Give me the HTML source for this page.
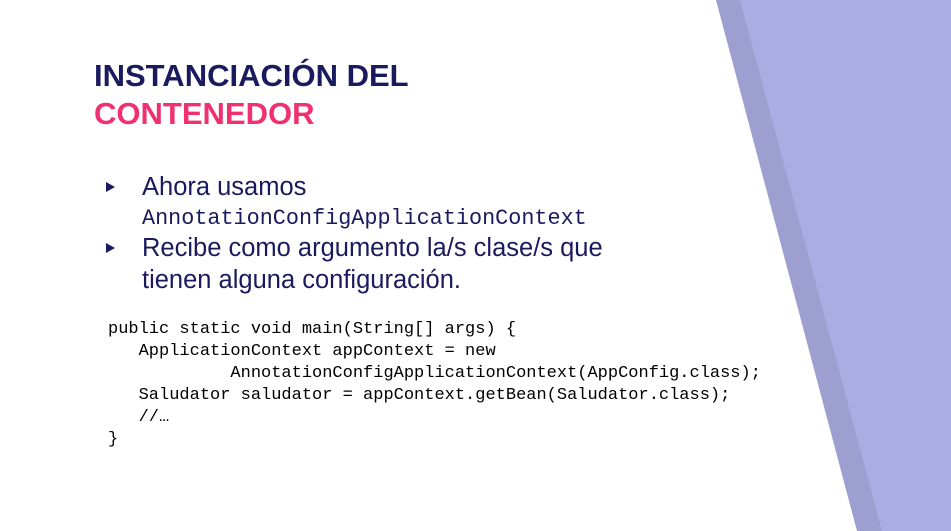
<!DOCTYPE html>
<html><head><meta charset="utf-8"><style>
body{margin:0;width:951px;height:531px;background:#fff;position:relative;overflow:hidden;font-family:"Liberation Sans",sans-serif}
svg{position:absolute;left:0;top:0}
.t{position:absolute;left:94px;font-weight:bold;font-size:31px;letter-spacing:0;line-height:36px}
.b{position:absolute;left:142px;color:#1a1a5e;font-size:25.5px;line-height:31px;letter-spacing:0}
.bul{position:absolute;left:106px;width:0;height:0;border-top:5px solid transparent;border-bottom:5px solid transparent;border-left:9px solid #1a1a5e}
pre{position:absolute;left:108px;top:319px;margin:0;font-family:"Liberation Mono",monospace;font-size:17px;line-height:22px;color:#000}
</style></head><body>
<svg width="951" height="531"><polygon points="716,0 951,0 951,531 857,531" fill="#9c9fcf"/><polygon points="740,0 951,0 951,531 882,531" fill="#aaade3"/></svg>
<div class="t" style="top:58px;color:#1a1a5e">INSTANCIACIÓN DEL</div>
<div class="t" style="top:96px;color:#f0306f">CONTENEDOR</div>
<div class="bul" style="top:182px"></div>
<div class="b" style="top:172px">Ahora usamos</div>
<div class="b" style="top:203px;font-family:'Liberation Mono',monospace;font-size:21.8px;letter-spacing:0">AnnotationConfigApplicationContext</div>
<div class="bul" style="top:243px"></div>
<div class="b" style="top:233px">Recibe como argumento la/s clase/s que</div>
<div class="b" style="top:265px">tienen alguna configuración.</div>
<pre>public static void main(String[] args) {
   ApplicationContext appContext = new
            AnnotationConfigApplicationContext(AppConfig.class);
   Saludator saludator = appContext.getBean(Saludator.class);
   //…
}</pre>
</body></html>
